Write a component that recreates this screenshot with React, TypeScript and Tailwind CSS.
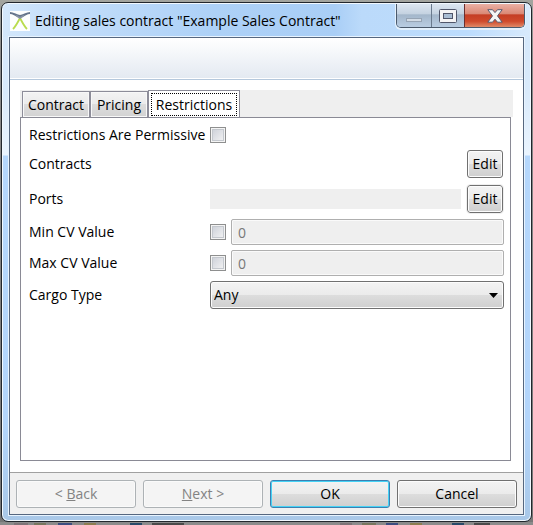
import React from "react";

const buttonLook =
  "rounded-[3px] border border-[#707070] bg-[linear-gradient(#f3f3f3_0%,#ebebeb_49%,#dddddd_50%,#cfcfcf_100%)] shadow-[inset_0_0_0_1px_#fcfcfc]";

const checkLook =
  "size-4 shrink-0 appearance-none border border-[#8e8f8f] bg-[linear-gradient(135deg,#c9cdd6,#f6f6f6)] shadow-[inset_0_0_0_1px_#f4f4f4,inset_0_0_0_2px_#c4c8ce] checked:bg-[#4a5f97]";

const labelLook = "w-[181px] shrink-0";

function AppLogo() {
  return (
    <svg viewBox="0 0 20 20" className="size-5 shrink-0" aria-hidden="true">
      <rect width="20" height="20" fill="#fdfefe" />
      <path d="M3 18C6 15 8 11 10 7C12 11 14 15 17 18" fill="none" stroke="#b9dc4e" strokeWidth="1.800" />
      <path d="M0 2C4 2 6 5 10 5S16 2 20 2" fill="none" stroke="#65758c" strokeWidth="2.200" />
      <path d="M6 4.500L10 7L14 4.500" fill="none" stroke="#8793a5" strokeWidth="1.500" />
    </svg>
  );
}

function CaptionButtons() {
  return (
    <div className="mr-[5px] flex h-6 shrink-0 overflow-hidden rounded-b-[5px] border border-t-0 border-[#4b5a6c] shadow-[0_1px_0_1px_#e4f1fd]">
      <button
        aria-label="Minimize"
        className="flex w-[35px] items-center justify-center border-r border-[#6a7a8d] bg-[linear-gradient(#dce6f0_0%,#c3d1e0_45%,#a3b6ca_46%,#b9cde2_100%)]"
      >
        <svg viewBox="0 0 18 16" className="h-4 w-[18px]" aria-hidden="true">
          <rect x="1.500" y="10.500" width="15" height="3" fill="#d3dce6" stroke="#96a4b4" />
        </svg>
      </button>
      <button
        aria-label="Maximize"
        className="flex w-[33px] items-center justify-center border-r border-[#6b2f2f] bg-[linear-gradient(#dce6f0_0%,#c3d1e0_45%,#a3b6ca_46%,#b9cde2_100%)]"
      >
        <svg viewBox="0 0 18 14" className="h-3.5 w-[18px]" aria-hidden="true">
          <rect x=".5" y=".5" width="17" height="13" rx="1" fill="#f4f4f5" stroke="#50566a" />
          <rect x="4.500" y="4.500" width="9" height="5" fill="#a9bdd3" stroke="#50566a" />
        </svg>
      </button>
      <button
        aria-label="Close"
        className="flex w-[59px] items-center justify-center bg-[linear-gradient(#eab0a4_0%,#d98673_45%,#c43d24_46%,#cf4a2c_75%,#e08a68_100%)]"
      >
        <svg viewBox="0 0 16 14" className="h-3.5 w-4" aria-hidden="true">
          <path
            d="M.8.700H5.500L8 3.600L10.500.700H15.200L10.500 6.900L15.200 13.200H10.500L8 10.200L5.500 13.200H.8L5.500 6.900Z"
            fill="#f5f5f5"
            stroke="#565a70"
          />
        </svg>
      </button>
    </div>
  );
}

function Tabs() {
  const idle =
    "h-[26px] border border-b-0 border-[#8d8d99] bg-[linear-gradient(#f3f3f3_0%,#ebebeb_49%,#dddddd_50%,#d2d2d2_100%)] shadow-[inset_0_0_0_1px_#f8f8f8]";
  return (
    <div role="tablist" className="-mr-0.5 flex h-[27px] items-end bg-[#efefef] pl-0.5">
      <button role="tab" aria-selected="false" className={`${idle} w-[68px]`}>
        Contract
      </button>
      <button role="tab" aria-selected="false" className={`${idle} w-[58px]`}>
        Pricing
      </button>
      <button
        role="tab"
        aria-selected="true"
        className="-mb-px h-7 w-[92px] border border-b-0 border-[#8d8d99] bg-white px-0.5 pt-0.5 pb-0.5"
      >
        <span className="flex h-[23px] items-center justify-center border border-dotted border-black">Restrictions</span>
      </button>
    </div>
  );
}

function ValueRow({ id, label }: { id: string; label: string }) {
  return (
    <div className="flex h-[26px] items-center">
      <label htmlFor={id} className={labelLook}>
        {label}
      </label>
      <input type="checkbox" aria-label={`${label} enabled`} className={checkLook} />
      <input
        id={id}
        disabled
        defaultValue="0"
        className="ml-[5px] h-[26px] min-w-0 flex-1 rounded-[2px] border border-[#afafaf] bg-[#efefef] px-1.5 text-[#787878] shadow-[inset_0_0_0_1px_#fafafa]"
      />
    </div>
  );
}

function Restrictions() {
  return (
    <form className="flex flex-col gap-[5px]">
      <div className="flex h-5 items-center">
        <label htmlFor="permissive" className={labelLook}>
          Restrictions Are Permissive
        </label>
        <input id="permissive" type="checkbox" className={checkLook} />
      </div>
      <div className="flex items-center justify-between">
        <span className={labelLook}>Contracts</span>
        <button type="button" aria-label="Edit contracts" className={`${buttonLook} mr-px h-7 w-9`}>
          Edit
        </button>
      </div>
      <div className="flex items-center pt-0.5 pb-px">
        <span className={labelLook}>Ports</span>
        <div className="mr-1.5 h-5 flex-1 bg-[#efefef]" />
        <button
          type="button"
          aria-label="Edit ports"
          className={`${buttonLook} mr-px h-7 w-9 outline outline-[#efefef]`}
        >
          Edit
        </button>
      </div>
      <ValueRow id="min-cv" label="Min CV Value" />
      <ValueRow id="max-cv" label="Max CV Value" />
      <div className="flex items-center">
        <label htmlFor="cargo" className={labelLook}>
          Cargo Type
        </label>
        <div className="relative flex-1">
          <select id="cargo" className={`${buttonLook} h-7 w-full appearance-none pl-[3px]`}>
            <option>Any</option>
          </select>
          <svg
            viewBox="0 0 9 5"
            className="pointer-events-none absolute top-3 right-1.5 h-[5px] w-[9px]"
            aria-hidden="true"
          >
            <path d="M0 0H9L4.500 5Z" fill="#000" />
          </svg>
        </div>
      </div>
    </form>
  );
}

function Backdrop() {
  return (
    <div className="flex h-[3px] items-end gap-1.5 overflow-hidden bg-[#8b8b8b] pl-3.5">
      <i className="h-0.5 w-3.5 bg-[#7d7377]" />
      <i className="h-0.5 w-3 bg-[#77765e]" />
      <i className="ml-1.5 h-0.5 w-3.5 bg-[#3c4d80]" />
      <i className="ml-1.5 h-0.5 w-3 bg-[#8b7d50]" />
      <i className="ml-7 h-0.5 w-3 bg-[#294a69]" />
      <i className="ml-1 h-0.5 w-8 bg-[#4a4a4a]" />
      <i className="ml-[150px] h-0.5 w-3 bg-[#7d7377]" />
      <i className="ml-1 h-0.5 w-3.5 bg-[#77765e]" />
      <i className="ml-1 h-0.5 w-3 bg-[#3c4d80]" />
      <i className="ml-1.5 h-0.5 w-3 bg-[#8b7d50]" />
      <i className="ml-6 h-0.5 w-3 bg-[#294a69]" />
      <i className="ml-1 h-0.5 w-4 bg-[#4a4a4a]" />
    </div>
  );
}

export default function App() {
  const action = "h-7 min-w-0 flex-1";
  const disabled =
    "rounded-[3px] border border-[#adb2b5] bg-[#f4f4f4] text-[#838383] shadow-[inset_0_0_0_1px_#fafafa]";
  return (
    <div className="flex min-h-screen flex-col bg-[linear-gradient(#a3a59f_0%,#8b8b8b_10%,#777777_100%)] pt-0.5 font-['Open_Sans','Noto_Sans',sans-serif] text-[14px] leading-5 text-black">
      <div className="mr-px ml-px flex flex-1 flex-col rounded-[7px] border border-[#22272d] bg-[linear-gradient(#d3e7fb_0px,#d9eafb_90px,#eaf4fe_152px,#b5d7fc_153px,#b3d5fb_420px,#a9c8e8_100%)] px-[7px] pb-1.5 shadow-[inset_0_0_0_1px_#f2f9ff]">
        <header className="-mx-1.5 mt-px flex h-[33px] items-start rounded-t-[5px] bg-[linear-gradient(90deg,#d3e7fb_0%,#c4defa_10%,#add1f7_40%,#a9cef6_63%,#bbdafa_68%,#bcdcfd_88%,#d8eafc_100%)] pl-[7px]">
          <div className="flex h-[33px] min-w-0 flex-1 items-center">
            <AppLogo />
            <h1 className="ml-[5px] truncate text-[14px]">Editing sales contract &quot;Example Sales Contract&quot;</h1>
          </div>
          <CaptionButtons />
        </header>
        <main className="flex flex-1 flex-col border border-[#56677f] bg-white shadow-[0_0_0_1px_#e8f4ff]">
          <div className="h-[42px] border-b border-[#b5c8dc] bg-[linear-gradient(#ffffff,#e3e9f1)] shadow-[inset_0_-1px_0_#ffffff]" />
          <div className="flex flex-1 flex-col pt-2.5 pr-3 pb-[11px] pl-2.5">
            <Tabs />
            <section role="tabpanel" aria-label="Restrictions" className="flex-1 border border-[#8a8a95] pt-[7px] pr-1.5 pl-2">
              <Restrictions />
            </section>
          </div>
          <footer className="flex gap-[7px] border-t border-[#a0a0a0] bg-[#f0f0f0] px-1.5 pt-[7px] pb-1.5">
            <button disabled className={`${action} ${disabled}`}>
              &lt; <u>B</u>ack
            </button>
            <button disabled className={`${action} ${disabled}`}>
              <u>N</u>ext &gt;
            </button>
            <button
              className={`${action} rounded-[3px] border border-[#3c7fb1] bg-[linear-gradient(#f3f3f3_0%,#ebebeb_49%,#dddddd_50%,#cfcfcf_100%)] shadow-[inset_0_0_0_1px_#45d2f5]`}
            >
              OK
            </button>
            <button className={`${action} ${buttonLook}`}>Cancel</button>
          </footer>
        </main>
      </div>
      <Backdrop />
    </div>
  );
}
